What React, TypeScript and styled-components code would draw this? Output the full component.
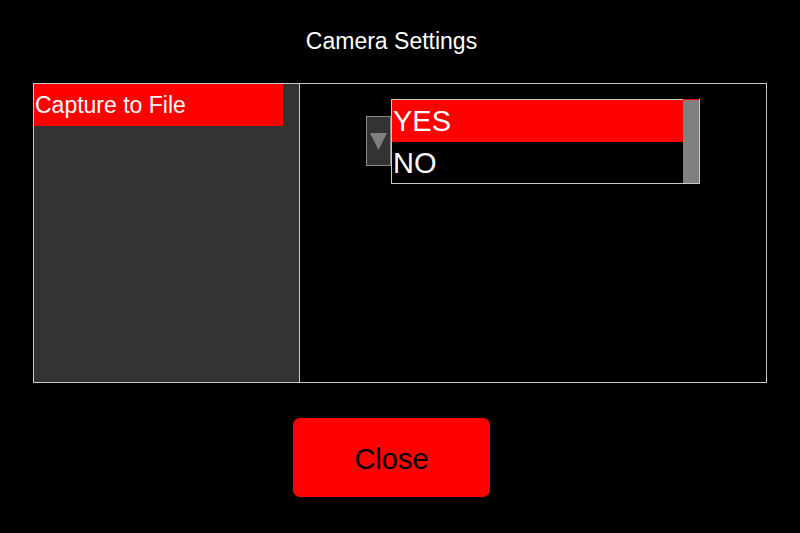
import React from "react";
import styled, { createGlobalStyle } from "styled-components";

const Global = createGlobalStyle`
  html, body { margin: 0; padding: 0; background: #000; }
  body { width: 800px; height: 533px; overflow: hidden; font-family: "Liberation Sans", Arial, sans-serif; }
`;

const Screen = styled.div`
  width: 800px;
  height: 533px;
  background: #000;
  display: flex;
  flex-direction: column;
  align-items: center;
`;

const Title = styled.div`
  margin-top: 28px;
  margin-right: 17px;
  height: 26px;
  line-height: 26px;
  font-size: 23px;
  color: #fff;
`;

const Panel = styled.div`
  margin-top: 29px;
  width: 732px;
  height: 298px;
  border: 1px solid #c8c8c8;
  display: flex;
`;

const Sidebar = styled.div`
  width: 265px;
  background: #333;
  border-right: 1px solid #c8c8c8;
  display: flex;
  flex-direction: column;
`;

const MenuItem = styled.div<{ $active?: boolean }>`
  width: 248px;
  height: 42px;
  line-height: 42px;
  font-size: 23px;
  color: #fff;
  padding-left: 1px;
  background: ${(p) => (p.$active ? "#ff0000" : "transparent")};
  white-space: nowrap;
`;

const Content = styled.div`
  flex: 1;
  display: flex;
  align-items: flex-start;
  padding-left: 66px;
`;

const DropButton = styled.div`
  margin-top: 32px;
  width: 23px;
  height: 48px;
  background: #333;
  border: 1px solid #8a8a8a;
  display: flex;
  align-items: center;
  justify-content: center;
`;

const ListBox = styled.div`
  margin-top: 15px;
  width: 307px;
  height: 83px;
  border: 1px solid #c8c8c8;
  display: flex;
`;

const Rows = styled.div`
  flex: 1;
  display: flex;
  flex-direction: column;
`;

const Row = styled.div<{ $active?: boolean; $h: number }>`
  height: ${(p) => p.$h}px;
  line-height: 42px;
  font-size: 29px;
  color: #fff;
  padding-left: 1px;
  background: ${(p) => (p.$active ? "#ff0000" : "#000")};
`;

const ScrollBar = styled.div`
  width: 16px;
  background: #808080;
  border-top: 1px solid #ff0000;
  margin-top: -1px;
`;

const ButtonRow = styled.div`
  width: 800px;
  margin-top: 35px;
  display: flex;
  padding-left: 293px;
  box-sizing: border-box;
`;

const CloseButton = styled.button`
  width: 197px;
  height: 79px;
  border: none;
  border-radius: 7px;
  background: #ff0000;
  color: #000;
  font-family: "Liberation Sans", Arial, sans-serif;
  font-size: 29px;
  padding: 4px 0 0;
  cursor: pointer;
`;

export default function App() {
  return (
    <>
      <Global />
      <Screen>
        <Title>Camera Settings</Title>
        <Panel>
          <Sidebar>
            <MenuItem $active>Capture to File</MenuItem>
          </Sidebar>
          <Content>
            <DropButton>
              <svg width="17" height="17" viewBox="0 0 17 17">
                <polygon points="0,0 17,0 8.5,17" fill="#808080" />
              </svg>
            </DropButton>
            <ListBox>
              <Rows>
                <Row $active $h={42}>YES</Row>
                <Row $h={41}>NO</Row>
              </Rows>
              <ScrollBar />
            </ListBox>
          </Content>
        </Panel>
        <ButtonRow>
          <CloseButton>Close</CloseButton>
        </ButtonRow>
      </Screen>
    </>
  );
}
